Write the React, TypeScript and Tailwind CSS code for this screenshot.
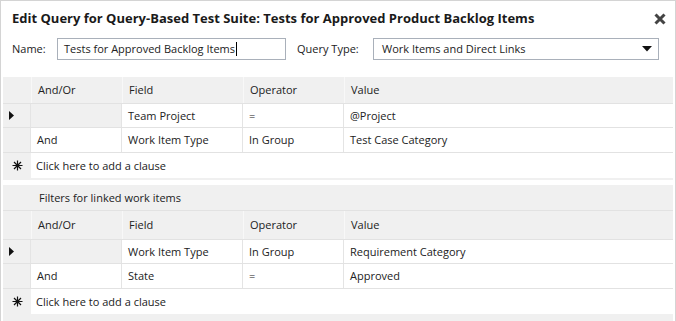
import React from 'react';

type Row = { andOr: string; field: string; op: string; value: string; current?: boolean; h: string };

const clauses: Row[] = [
  { andOr: '', field: 'Team Project', op: '=', value: '@Project', current: true, h: 'h-[24px]' },
  { andOr: 'And', field: 'Work Item Type', op: 'In Group', value: 'Test Case Category', h: 'h-[25px]' },
];

const linkedClauses: Row[] = [
  { andOr: '', field: 'Work Item Type', op: 'In Group', value: 'Requirement Category', current: true, h: 'h-[24px]' },
  { andOr: 'And', field: 'State', op: '=', value: 'Approved', h: 'h-[25px]' },
];

const cols = 'grid grid-cols-[27px_90px_120px_100px_1fr] gap-x-px';

function Star() {
  return (
    <svg width="11" height="11" viewBox="0 0 11 11">
      <path
        d="M5.5 0.5 V10.5 M0.5 5.5 H10.5 M2 2 L9 9 M9 2 L2 9"
        stroke="#111"
        strokeWidth="1.2"
      />
    </svg>
  );
}

function ClauseGrid({ rows, title, headH }: { rows: Row[]; title?: string; headH: string }) {
  return (
    <div className="shrink-0 mx-[2px] bg-[#f0f0f0] flex flex-col pb-[2px]">
      {title && (
        <div className="shrink-0 h-[26px] flex items-center pl-[36px] pt-px border-b border-[#e2e2e2]">{title}</div>
      )}
      <div className={`${cols} ${headH} shrink-0 border-b border-[#e2e2e2]`}>
        <div />
        <div className="flex items-center pl-[6px] pt-px border-l border-[#f8f8f8]">And/Or</div>
        <div className="flex items-center pl-[6px] pt-px border-l border-[#f8f8f8]">Field</div>
        <div className="flex items-center pl-[6px] pt-px border-l border-[#f8f8f8]">Operator</div>
        <div className="flex items-center pl-[6px] pt-px border-l border-[#f8f8f8]">Value</div>
      </div>
      {rows.map((r, i) => (
        <div key={i} className={`${cols} ${r.h} shrink-0 bg-[#e4e4e4] border-b border-[#e2e2e2]`}>
          <div className="bg-[#f0f0f0] flex items-center pl-[6px]">
            {r.current && (
              <svg width="5" height="9" viewBox="0 0 5 9">
                <path d="M0 0 L5 4.5 L0 9 Z" fill="#111" />
              </svg>
            )}
          </div>
          <div className={`flex items-center pl-[6px] pt-px ${r.current ? 'bg-[#f0f0f0]' : 'bg-white'}`}>{r.andOr}</div>
          <div className="flex items-center pl-[6px] pt-px bg-white">{r.field}</div>
          <div className="flex items-center pl-[6px] pt-px bg-white">{r.op}</div>
          <div className="flex items-center pl-[6px] pt-px bg-white">{r.value}</div>
        </div>
      ))}
      <div className="shrink-0 grid grid-cols-[27px_1fr] gap-x-px h-[25px]">
        <div className="flex items-center justify-center pl-[1px]">
          <Star />
        </div>
        <div className="flex items-center pl-[5px] pt-px bg-white">Click here to add a clause</div>
      </div>
    </div>
  );
}

export default function App() {
  return (
    <div className="w-[676px] h-[321px] overflow-hidden bg-white border border-b-0 border-[#d4d4d4] text-[11px] text-[#222] font-['Open_Sans',sans-serif] flex flex-col">
      <div className="shrink-0 h-[33px] flex items-center justify-between pl-[11px] pr-[9px] pt-[2px]">
        <h1 className="text-[13px] font-bold text-[#1a1a1a]">
          Edit Query for Query-Based Test Suite: Tests for Approved Product Backlog Items
        </h1>
        <svg width="12" height="12" viewBox="0 0 12 12">
          <path d="M1.5 1.5 L10.5 10.5 M10.5 1.5 L1.5 10.5" stroke="#444" strokeWidth="3" />
        </svg>
      </div>
      <div className="shrink-0 flex items-center h-[22px] mt-[4px] pl-[11px]">
        <span className="w-[45px]">Name:</span>
        <div className="w-[229px] h-[22px] border border-[#a9b0ba] flex items-center pl-[6px]">
          Tests for Approved Backlog Items
          <span className="w-px h-[14px] bg-black ml-[1px]" />
        </div>
        <span className="ml-[11px] w-[76px]">Query Type:</span>
        <div className="w-[286px] h-[22px] border border-[#a9b0ba] flex items-center justify-between pl-[8px] pr-[6px]">
          Work Items and Direct Links
          <svg width="10" height="6" viewBox="0 0 10 6">
            <path d="M0 0 L10 0 L5 5.5 Z" fill="#111" />
          </svg>
        </div>
      </div>
      <div className="shrink-0 mt-[17px] flex flex-col gap-[5px]">
        <ClauseGrid rows={clauses} headH="h-[27px]" />
        <ClauseGrid rows={linkedClauses} title="Filters for linked work items" headH="h-[29px]" />
      </div>
      <div className="shrink-0 mx-[2px] mt-0 h-[10px] bg-[#f0f0f0]" />
    </div>
  );
}
